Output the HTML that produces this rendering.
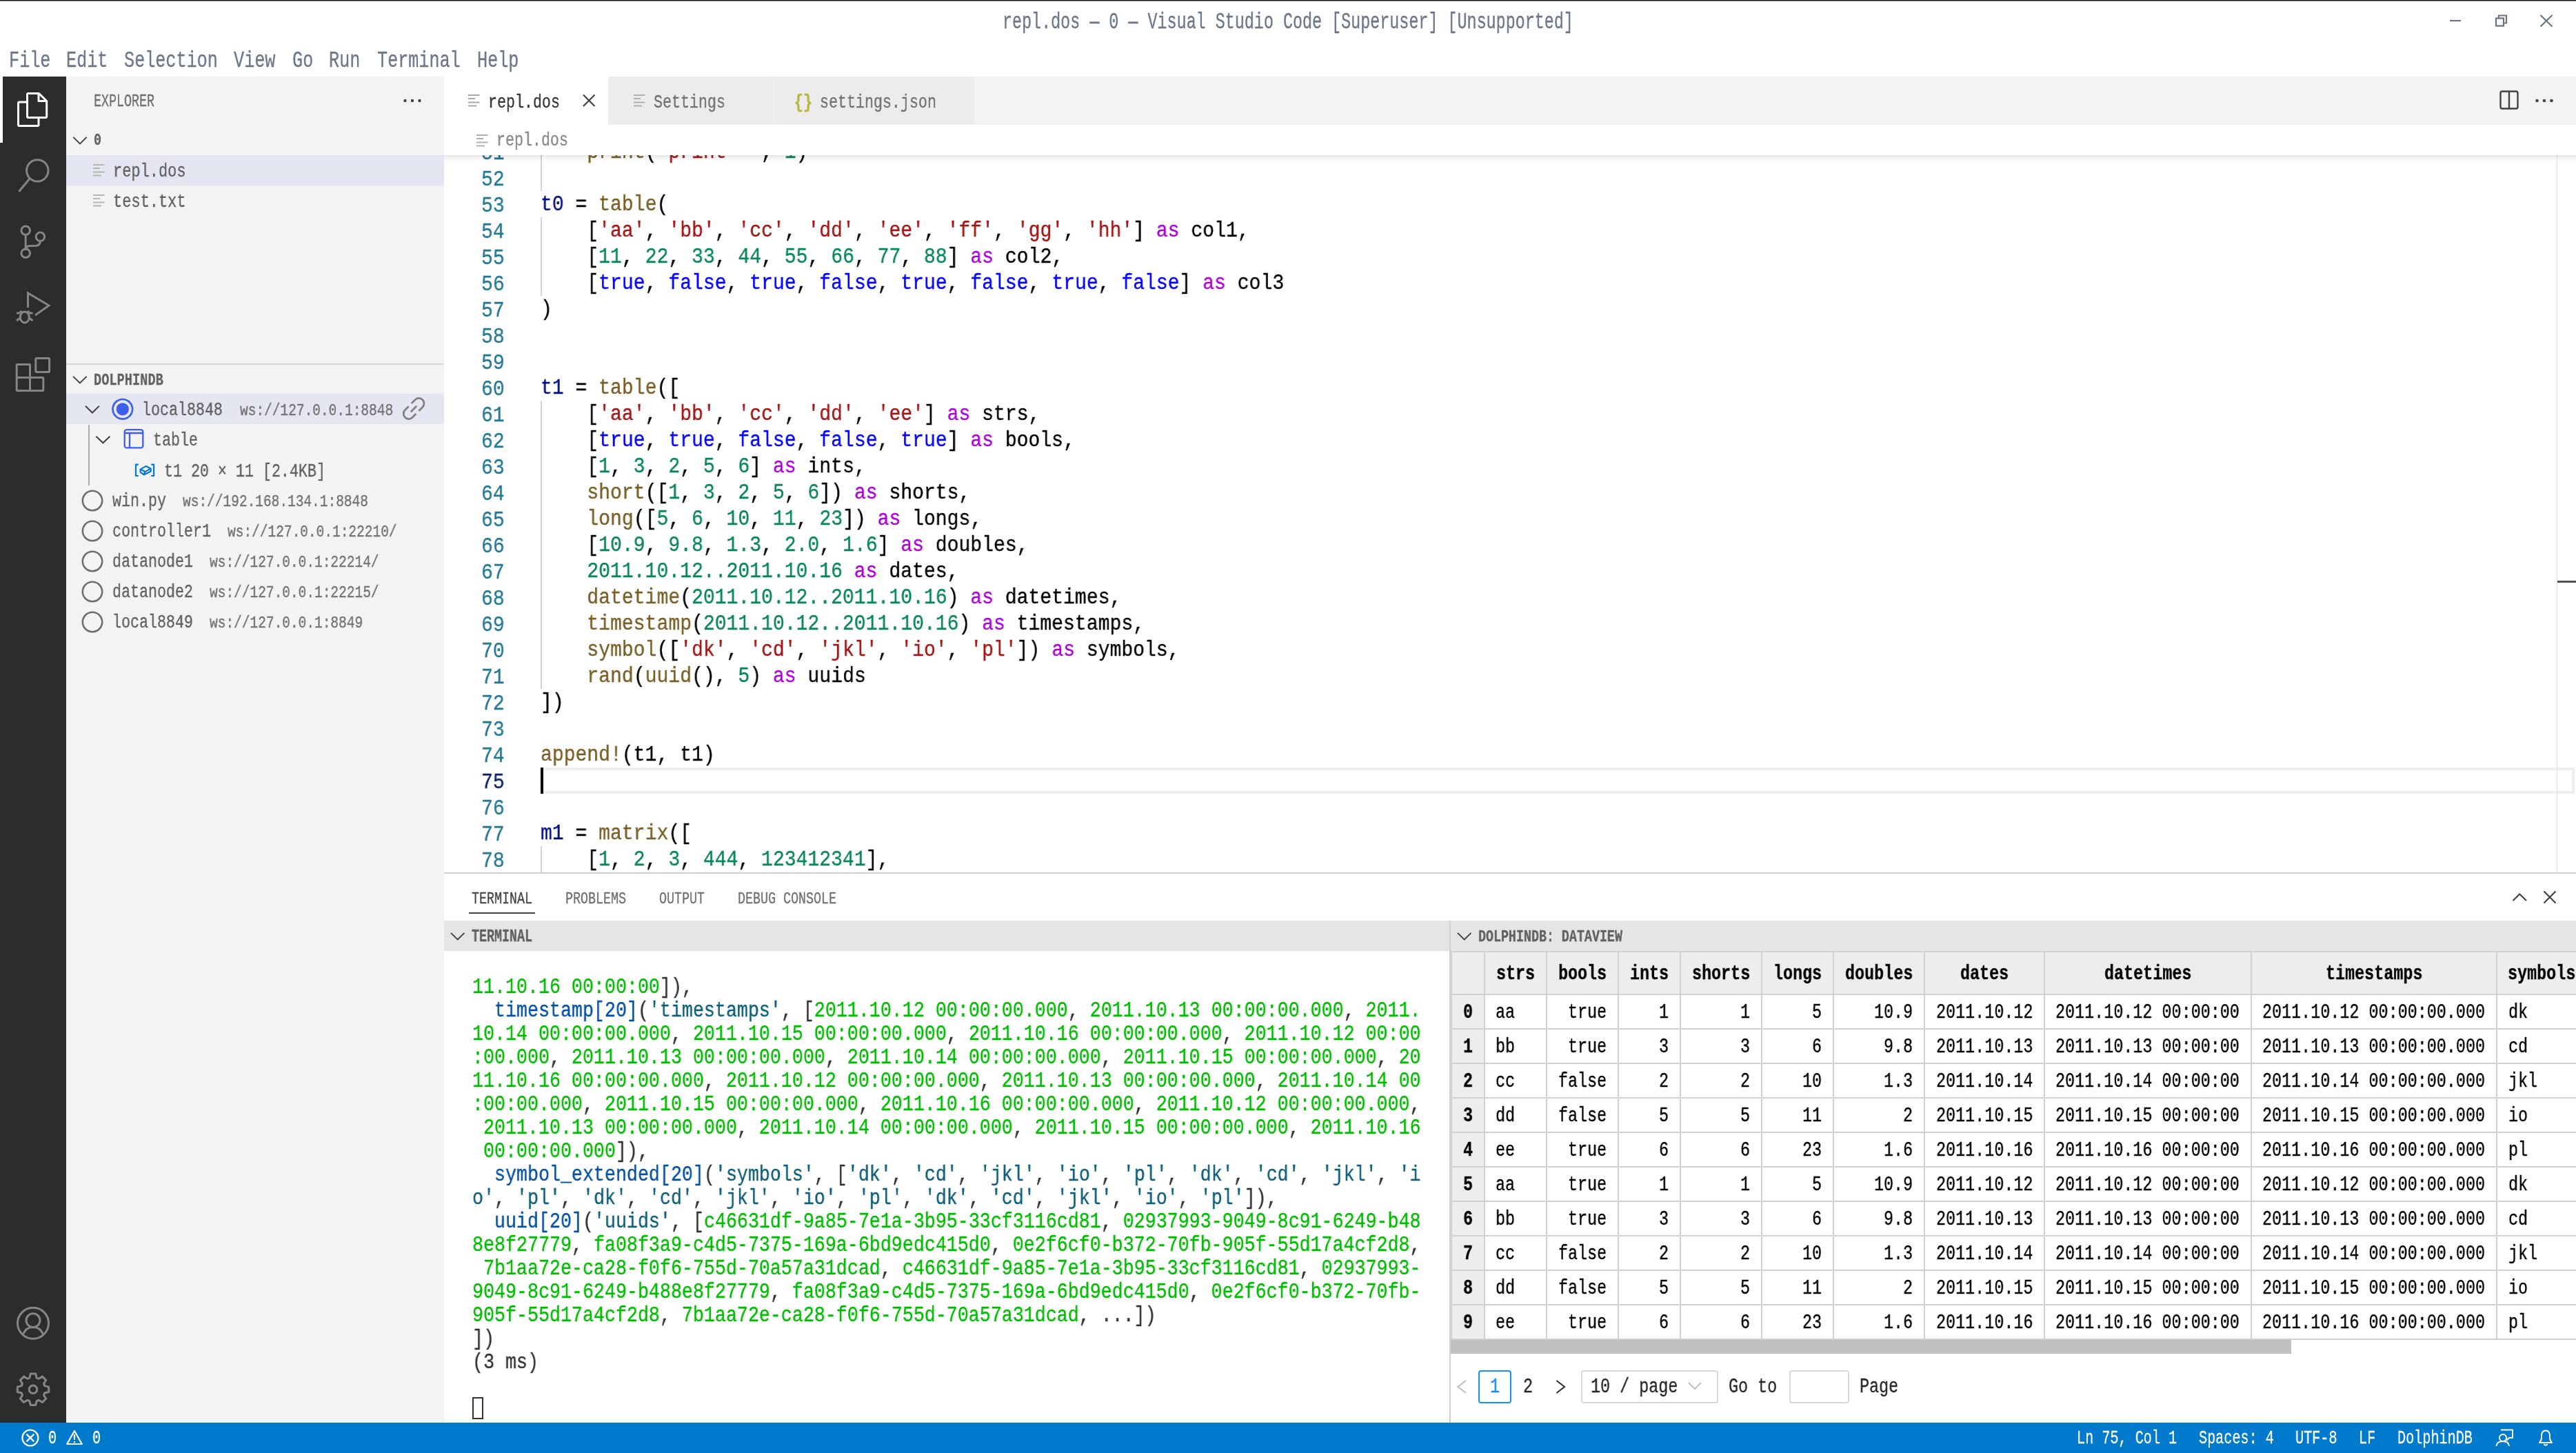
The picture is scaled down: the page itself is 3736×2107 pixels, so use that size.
<!DOCTYPE html>
<html><head><meta charset="utf-8"><style>
html,body{margin:0;padding:0;width:3736px;height:2107px;overflow:hidden;background:#fff;}
body>div{position:absolute;}
.t{position:absolute;white-space:pre;line-height:1;font-family:"Liberation Mono",monospace;will-change:transform;-webkit-text-stroke:0.35px currentColor;}
</style></head><body>
<div style="left:0px;top:0px;width:3736px;height:111px;background:#ffffff;"></div><div style="left:0px;top:0px;width:3736px;height:1px;background:#0b0e17;"></div><div style="left:0px;top:1px;width:3736px;height:1px;background:#8a8c90;"></div><div style="left:0px;top:111px;width:96px;height:1952px;background:#2c2c2c;"></div><div style="left:0px;top:111px;width:4px;height:96px;background:#ffffff;"></div><div style="left:96px;top:111px;width:548px;height:1952px;background:#f3f3f3;"></div><div style="left:644px;top:111px;width:3092px;height:70px;background:#f3f3f3;"></div><div style="left:644px;top:181px;width:3092px;height:1085px;background:#ffffff;"></div><div style="left:644px;top:1266px;width:3092px;height:797px;background:#ffffff;"></div><div style="left:644px;top:1265px;width:3092px;height:2px;background:#d0d0d0;"></div><div style="left:0px;top:2063px;width:3736px;height:44px;background:#007acc;"></div><div class="t" style="left:1453.60px;top:15.54px;font-size:33.095px;color:#6b7689;font-weight:400;transform:scaleX(0.7069);transform-origin:0 25.36px;">repl.dos — 0 — Visual Studio Code [Superuser] [Unsupported]</div><div class="t" style="left:12.70px;top:71.53px;font-size:33.247px;color:#6b7689;font-weight:400;transform:scaleX(0.7568);transform-origin:0 25.47px;">File</div><div class="t" style="left:96.20px;top:71.53px;font-size:33.247px;color:#6b7689;font-weight:400;transform:scaleX(0.7568);transform-origin:0 25.47px;">Edit</div><div class="t" style="left:179.70px;top:71.53px;font-size:33.247px;color:#6b7689;font-weight:400;transform:scaleX(0.7568);transform-origin:0 25.47px;">Selection</div><div class="t" style="left:339.10px;top:71.53px;font-size:33.247px;color:#6b7689;font-weight:400;transform:scaleX(0.7568);transform-origin:0 25.47px;">View</div><div class="t" style="left:423.50px;top:71.53px;font-size:33.247px;color:#6b7689;font-weight:400;transform:scaleX(0.7568);transform-origin:0 25.47px;">Go</div><div class="t" style="left:477.10px;top:71.53px;font-size:33.247px;color:#6b7689;font-weight:400;transform:scaleX(0.7568);transform-origin:0 25.47px;">Run</div><div class="t" style="left:547.00px;top:71.53px;font-size:33.247px;color:#6b7689;font-weight:400;transform:scaleX(0.7568);transform-origin:0 25.47px;">Terminal</div><div class="t" style="left:692.00px;top:71.53px;font-size:33.247px;color:#6b7689;font-weight:400;transform:scaleX(0.7568);transform-origin:0 25.47px;">Help</div><div class="t" style="left:136.00px;top:135.09px;font-size:25.201px;color:#6f6f6f;font-weight:400;transform:scaleX(0.7274);transform-origin:0 19.31px;">EXPLORER</div><div class="t" style="left:136.00px;top:192.42px;font-size:23.987px;color:#616161;font-weight:700;transform:scaleX(0.7642);transform-origin:0 18.38px;">0</div><div style="left:96px;top:225px;width:548px;height:44px;background:#e4e6f1;"></div><div class="t" style="left:164.30px;top:234.86px;font-size:27.327px;color:#616161;font-weight:400;transform:scaleX(0.8049);transform-origin:0 20.94px;">repl.dos</div><div class="t" style="left:164.30px;top:278.86px;font-size:27.327px;color:#616161;font-weight:400;transform:scaleX(0.8049);transform-origin:0 20.94px;">test.txt</div><div style="left:96px;top:527px;width:548px;height:2px;background:#d9d9d9;"></div><div class="t" style="left:136.00px;top:540.25px;font-size:23.683px;color:#616161;font-weight:700;transform:scaleX(0.7881);transform-origin:0 18.15px;">DOLPHINDB</div><div style="left:96px;top:571px;width:548px;height:44px;background:#e4e6f1;"></div><div class="t" style="left:206.00px;top:580.76px;font-size:27.327px;color:#616161;font-weight:400;transform:scaleX(0.7927);transform-origin:0 20.94px;">local8848</div><div class="t" style="left:347.50px;top:583.55px;font-size:23.683px;color:#717171;font-weight:400;transform:scaleX(0.8232);transform-origin:0 18.15px;">ws://127.0.0.1:8848</div><div class="t" style="left:221.70px;top:625.06px;font-size:27.327px;color:#616161;font-weight:400;transform:scaleX(0.7927);transform-origin:0 20.94px;">table</div><div style="left:128px;top:616px;width:2px;height:88px;background:#a9a9a9;"></div><div class="t" style="left:237.60px;top:669.86px;font-size:27.327px;color:#616161;font-weight:400;transform:scaleX(0.7927);transform-origin:0 20.94px;">t1 20 × 11 [2.4KB]</div><div class="t" style="left:162.50px;top:712.76px;font-size:27.327px;color:#616161;font-weight:400;transform:scaleX(0.7927);transform-origin:0 20.94px;">win.py</div><div class="t" style="left:265.10px;top:715.55px;font-size:23.683px;color:#717171;font-weight:400;transform:scaleX(0.8232);transform-origin:0 18.15px;">ws://192.168.134.1:8848</div><div class="t" style="left:162.50px;top:756.76px;font-size:27.327px;color:#616161;font-weight:400;transform:scaleX(0.7927);transform-origin:0 20.94px;">controller1</div><div class="t" style="left:329.50px;top:759.55px;font-size:23.683px;color:#717171;font-weight:400;transform:scaleX(0.8232);transform-origin:0 18.15px;">ws://127.0.0.1:22210/</div><div class="t" style="left:162.50px;top:800.76px;font-size:27.327px;color:#616161;font-weight:400;transform:scaleX(0.7927);transform-origin:0 20.94px;">datanode1</div><div class="t" style="left:303.50px;top:803.55px;font-size:23.683px;color:#717171;font-weight:400;transform:scaleX(0.8232);transform-origin:0 18.15px;">ws://127.0.0.1:22214/</div><div class="t" style="left:162.50px;top:844.76px;font-size:27.327px;color:#616161;font-weight:400;transform:scaleX(0.7927);transform-origin:0 20.94px;">datanode2</div><div class="t" style="left:303.50px;top:847.55px;font-size:23.683px;color:#717171;font-weight:400;transform:scaleX(0.8232);transform-origin:0 18.15px;">ws://127.0.0.1:22215/</div><div class="t" style="left:162.50px;top:888.76px;font-size:27.327px;color:#616161;font-weight:400;transform:scaleX(0.7927);transform-origin:0 20.94px;">local8849</div><div class="t" style="left:303.50px;top:891.55px;font-size:23.683px;color:#717171;font-weight:400;transform:scaleX(0.8232);transform-origin:0 18.15px;">ws://127.0.0.1:8849</div><div style="left:644px;top:111px;width:238px;height:70px;background:#ffffff;"></div><div style="left:882px;top:111px;width:240px;height:70px;background:#ececec;"></div><div style="left:1123px;top:111px;width:290px;height:70px;background:#ececec;"></div><div class="t" style="left:707.70px;top:134.96px;font-size:27.327px;color:#333333;font-weight:400;transform:scaleX(0.7927);transform-origin:0 20.94px;">repl.dos</div><div class="t" style="left:948.00px;top:134.96px;font-size:27.327px;color:#717171;font-weight:400;transform:scaleX(0.7927);transform-origin:0 20.94px;">Settings</div><div class="t" style="left:1152.00px;top:134.96px;font-size:27.327px;color:#b7b73b;font-weight:700;transform:scaleX(0.7927);transform-origin:0 20.94px;">{}</div><div class="t" style="left:1189.00px;top:134.96px;font-size:27.327px;color:#717171;font-weight:400;transform:scaleX(0.7927);transform-origin:0 20.94px;">settings.json</div><div style="left:784px;top:1113px;width:2950px;height:38px;background:transparent;border:4px solid #eeeeee;box-sizing:border-box"></div><div style="left:784px;top:225px;width:2px;height:52px;background:#d3d3d3;"></div><div style="left:784px;top:315px;width:2px;height:114px;background:#d3d3d3;"></div><div style="left:784px;top:581px;width:2px;height:418px;background:#d3d3d3;"></div><div style="left:784px;top:1227px;width:2px;height:38px;background:#d3d3d3;"></div><div class="t" style="left:698.30px;top:207.14px;font-size:31.274px;color:#237893;font-weight:400;transform:scaleX(0.8978);transform-origin:0 23.96px;">51</div><div class="t" style="left:783.50px;top:205.44px;font-size:31.274px;font-weight:400;transform:scaleX(0.8978);transform-origin:0 23.96px"><span style="color:#000000">    </span><span style="color:#795e26">print</span><span style="color:#000000">(</span><span style="color:#a31515">&#x27;print  &#x27;</span><span style="color:#000000">, </span><span style="color:#098658">1</span><span style="color:#000000">)</span></div><div class="t" style="left:698.30px;top:245.14px;font-size:31.274px;color:#237893;font-weight:400;transform:scaleX(0.8978);transform-origin:0 23.96px;">52</div><div class="t" style="left:698.30px;top:283.14px;font-size:31.274px;color:#237893;font-weight:400;transform:scaleX(0.8978);transform-origin:0 23.96px;">53</div><div class="t" style="left:783.50px;top:281.44px;font-size:31.274px;font-weight:400;transform:scaleX(0.8978);transform-origin:0 23.96px"><span style="color:#001080">t0</span><span style="color:#000000"> = </span><span style="color:#795e26">table</span><span style="color:#000000">(</span></div><div class="t" style="left:698.30px;top:321.14px;font-size:31.274px;color:#237893;font-weight:400;transform:scaleX(0.8978);transform-origin:0 23.96px;">54</div><div class="t" style="left:783.50px;top:319.44px;font-size:31.274px;font-weight:400;transform:scaleX(0.8978);transform-origin:0 23.96px"><span style="color:#000000">    [</span><span style="color:#a31515">&#x27;aa&#x27;</span><span style="color:#000000">, </span><span style="color:#a31515">&#x27;bb&#x27;</span><span style="color:#000000">, </span><span style="color:#a31515">&#x27;cc&#x27;</span><span style="color:#000000">, </span><span style="color:#a31515">&#x27;dd&#x27;</span><span style="color:#000000">, </span><span style="color:#a31515">&#x27;ee&#x27;</span><span style="color:#000000">, </span><span style="color:#a31515">&#x27;ff&#x27;</span><span style="color:#000000">, </span><span style="color:#a31515">&#x27;gg&#x27;</span><span style="color:#000000">, </span><span style="color:#a31515">&#x27;hh&#x27;</span><span style="color:#000000">] </span><span style="color:#af00db">as</span><span style="color:#000000"> col1,</span></div><div class="t" style="left:698.30px;top:359.14px;font-size:31.274px;color:#237893;font-weight:400;transform:scaleX(0.8978);transform-origin:0 23.96px;">55</div><div class="t" style="left:783.50px;top:357.44px;font-size:31.274px;font-weight:400;transform:scaleX(0.8978);transform-origin:0 23.96px"><span style="color:#000000">    [</span><span style="color:#098658">11</span><span style="color:#000000">, </span><span style="color:#098658">22</span><span style="color:#000000">, </span><span style="color:#098658">33</span><span style="color:#000000">, </span><span style="color:#098658">44</span><span style="color:#000000">, </span><span style="color:#098658">55</span><span style="color:#000000">, </span><span style="color:#098658">66</span><span style="color:#000000">, </span><span style="color:#098658">77</span><span style="color:#000000">, </span><span style="color:#098658">88</span><span style="color:#000000">] </span><span style="color:#af00db">as</span><span style="color:#000000"> col2,</span></div><div class="t" style="left:698.30px;top:397.14px;font-size:31.274px;color:#237893;font-weight:400;transform:scaleX(0.8978);transform-origin:0 23.96px;">56</div><div class="t" style="left:783.50px;top:395.44px;font-size:31.274px;font-weight:400;transform:scaleX(0.8978);transform-origin:0 23.96px"><span style="color:#000000">    [</span><span style="color:#0000ff">true</span><span style="color:#000000">, </span><span style="color:#0000ff">false</span><span style="color:#000000">, </span><span style="color:#0000ff">true</span><span style="color:#000000">, </span><span style="color:#0000ff">false</span><span style="color:#000000">, </span><span style="color:#0000ff">true</span><span style="color:#000000">, </span><span style="color:#0000ff">false</span><span style="color:#000000">, </span><span style="color:#0000ff">true</span><span style="color:#000000">, </span><span style="color:#0000ff">false</span><span style="color:#000000">] </span><span style="color:#af00db">as</span><span style="color:#000000"> col3</span></div><div class="t" style="left:698.30px;top:435.14px;font-size:31.274px;color:#237893;font-weight:400;transform:scaleX(0.8978);transform-origin:0 23.96px;">57</div><div class="t" style="left:783.50px;top:433.44px;font-size:31.274px;font-weight:400;transform:scaleX(0.8978);transform-origin:0 23.96px"><span style="color:#000000">)</span></div><div class="t" style="left:698.30px;top:473.14px;font-size:31.274px;color:#237893;font-weight:400;transform:scaleX(0.8978);transform-origin:0 23.96px;">58</div><div class="t" style="left:698.30px;top:511.14px;font-size:31.274px;color:#237893;font-weight:400;transform:scaleX(0.8978);transform-origin:0 23.96px;">59</div><div class="t" style="left:698.30px;top:549.14px;font-size:31.274px;color:#237893;font-weight:400;transform:scaleX(0.8978);transform-origin:0 23.96px;">60</div><div class="t" style="left:783.50px;top:547.44px;font-size:31.274px;font-weight:400;transform:scaleX(0.8978);transform-origin:0 23.96px"><span style="color:#001080">t1</span><span style="color:#000000"> = </span><span style="color:#795e26">table</span><span style="color:#000000">([</span></div><div class="t" style="left:698.30px;top:587.14px;font-size:31.274px;color:#237893;font-weight:400;transform:scaleX(0.8978);transform-origin:0 23.96px;">61</div><div class="t" style="left:783.50px;top:585.44px;font-size:31.274px;font-weight:400;transform:scaleX(0.8978);transform-origin:0 23.96px"><span style="color:#000000">    [</span><span style="color:#a31515">&#x27;aa&#x27;</span><span style="color:#000000">, </span><span style="color:#a31515">&#x27;bb&#x27;</span><span style="color:#000000">, </span><span style="color:#a31515">&#x27;cc&#x27;</span><span style="color:#000000">, </span><span style="color:#a31515">&#x27;dd&#x27;</span><span style="color:#000000">, </span><span style="color:#a31515">&#x27;ee&#x27;</span><span style="color:#000000">] </span><span style="color:#af00db">as</span><span style="color:#000000"> strs,</span></div><div class="t" style="left:698.30px;top:625.14px;font-size:31.274px;color:#237893;font-weight:400;transform:scaleX(0.8978);transform-origin:0 23.96px;">62</div><div class="t" style="left:783.50px;top:623.44px;font-size:31.274px;font-weight:400;transform:scaleX(0.8978);transform-origin:0 23.96px"><span style="color:#000000">    [</span><span style="color:#0000ff">true</span><span style="color:#000000">, </span><span style="color:#0000ff">true</span><span style="color:#000000">, </span><span style="color:#0000ff">false</span><span style="color:#000000">, </span><span style="color:#0000ff">false</span><span style="color:#000000">, </span><span style="color:#0000ff">true</span><span style="color:#000000">] </span><span style="color:#af00db">as</span><span style="color:#000000"> bools,</span></div><div class="t" style="left:698.30px;top:663.14px;font-size:31.274px;color:#237893;font-weight:400;transform:scaleX(0.8978);transform-origin:0 23.96px;">63</div><div class="t" style="left:783.50px;top:661.44px;font-size:31.274px;font-weight:400;transform:scaleX(0.8978);transform-origin:0 23.96px"><span style="color:#000000">    [</span><span style="color:#098658">1</span><span style="color:#000000">, </span><span style="color:#098658">3</span><span style="color:#000000">, </span><span style="color:#098658">2</span><span style="color:#000000">, </span><span style="color:#098658">5</span><span style="color:#000000">, </span><span style="color:#098658">6</span><span style="color:#000000">] </span><span style="color:#af00db">as</span><span style="color:#000000"> ints,</span></div><div class="t" style="left:698.30px;top:701.14px;font-size:31.274px;color:#237893;font-weight:400;transform:scaleX(0.8978);transform-origin:0 23.96px;">64</div><div class="t" style="left:783.50px;top:699.44px;font-size:31.274px;font-weight:400;transform:scaleX(0.8978);transform-origin:0 23.96px"><span style="color:#000000">    </span><span style="color:#795e26">short</span><span style="color:#000000">([</span><span style="color:#098658">1</span><span style="color:#000000">, </span><span style="color:#098658">3</span><span style="color:#000000">, </span><span style="color:#098658">2</span><span style="color:#000000">, </span><span style="color:#098658">5</span><span style="color:#000000">, </span><span style="color:#098658">6</span><span style="color:#000000">]) </span><span style="color:#af00db">as</span><span style="color:#000000"> shorts,</span></div><div class="t" style="left:698.30px;top:739.14px;font-size:31.274px;color:#237893;font-weight:400;transform:scaleX(0.8978);transform-origin:0 23.96px;">65</div><div class="t" style="left:783.50px;top:737.44px;font-size:31.274px;font-weight:400;transform:scaleX(0.8978);transform-origin:0 23.96px"><span style="color:#000000">    </span><span style="color:#795e26">long</span><span style="color:#000000">([</span><span style="color:#098658">5</span><span style="color:#000000">, </span><span style="color:#098658">6</span><span style="color:#000000">, </span><span style="color:#098658">10</span><span style="color:#000000">, </span><span style="color:#098658">11</span><span style="color:#000000">, </span><span style="color:#098658">23</span><span style="color:#000000">]) </span><span style="color:#af00db">as</span><span style="color:#000000"> longs,</span></div><div class="t" style="left:698.30px;top:777.14px;font-size:31.274px;color:#237893;font-weight:400;transform:scaleX(0.8978);transform-origin:0 23.96px;">66</div><div class="t" style="left:783.50px;top:775.44px;font-size:31.274px;font-weight:400;transform:scaleX(0.8978);transform-origin:0 23.96px"><span style="color:#000000">    [</span><span style="color:#098658">10.9</span><span style="color:#000000">, </span><span style="color:#098658">9.8</span><span style="color:#000000">, </span><span style="color:#098658">1.3</span><span style="color:#000000">, </span><span style="color:#098658">2.0</span><span style="color:#000000">, </span><span style="color:#098658">1.6</span><span style="color:#000000">] </span><span style="color:#af00db">as</span><span style="color:#000000"> doubles,</span></div><div class="t" style="left:698.30px;top:815.14px;font-size:31.274px;color:#237893;font-weight:400;transform:scaleX(0.8978);transform-origin:0 23.96px;">67</div><div class="t" style="left:783.50px;top:813.44px;font-size:31.274px;font-weight:400;transform:scaleX(0.8978);transform-origin:0 23.96px"><span style="color:#000000">    </span><span style="color:#098658">2011.10.12..2011.10.16</span><span style="color:#000000"> </span><span style="color:#af00db">as</span><span style="color:#000000"> dates,</span></div><div class="t" style="left:698.30px;top:853.14px;font-size:31.274px;color:#237893;font-weight:400;transform:scaleX(0.8978);transform-origin:0 23.96px;">68</div><div class="t" style="left:783.50px;top:851.44px;font-size:31.274px;font-weight:400;transform:scaleX(0.8978);transform-origin:0 23.96px"><span style="color:#000000">    </span><span style="color:#795e26">datetime</span><span style="color:#000000">(</span><span style="color:#098658">2011.10.12..2011.10.16</span><span style="color:#000000">) </span><span style="color:#af00db">as</span><span style="color:#000000"> datetimes,</span></div><div class="t" style="left:698.30px;top:891.14px;font-size:31.274px;color:#237893;font-weight:400;transform:scaleX(0.8978);transform-origin:0 23.96px;">69</div><div class="t" style="left:783.50px;top:889.44px;font-size:31.274px;font-weight:400;transform:scaleX(0.8978);transform-origin:0 23.96px"><span style="color:#000000">    </span><span style="color:#795e26">timestamp</span><span style="color:#000000">(</span><span style="color:#098658">2011.10.12..2011.10.16</span><span style="color:#000000">) </span><span style="color:#af00db">as</span><span style="color:#000000"> timestamps,</span></div><div class="t" style="left:698.30px;top:929.14px;font-size:31.274px;color:#237893;font-weight:400;transform:scaleX(0.8978);transform-origin:0 23.96px;">70</div><div class="t" style="left:783.50px;top:927.44px;font-size:31.274px;font-weight:400;transform:scaleX(0.8978);transform-origin:0 23.96px"><span style="color:#000000">    </span><span style="color:#795e26">symbol</span><span style="color:#000000">([</span><span style="color:#a31515">&#x27;dk&#x27;</span><span style="color:#000000">, </span><span style="color:#a31515">&#x27;cd&#x27;</span><span style="color:#000000">, </span><span style="color:#a31515">&#x27;jkl&#x27;</span><span style="color:#000000">, </span><span style="color:#a31515">&#x27;io&#x27;</span><span style="color:#000000">, </span><span style="color:#a31515">&#x27;pl&#x27;</span><span style="color:#000000">]) </span><span style="color:#af00db">as</span><span style="color:#000000"> symbols,</span></div><div class="t" style="left:698.30px;top:967.14px;font-size:31.274px;color:#237893;font-weight:400;transform:scaleX(0.8978);transform-origin:0 23.96px;">71</div><div class="t" style="left:783.50px;top:965.44px;font-size:31.274px;font-weight:400;transform:scaleX(0.8978);transform-origin:0 23.96px"><span style="color:#000000">    </span><span style="color:#795e26">rand</span><span style="color:#000000">(</span><span style="color:#795e26">uuid</span><span style="color:#000000">(), </span><span style="color:#098658">5</span><span style="color:#000000">) </span><span style="color:#af00db">as</span><span style="color:#000000"> uuids</span></div><div class="t" style="left:698.30px;top:1005.14px;font-size:31.274px;color:#237893;font-weight:400;transform:scaleX(0.8978);transform-origin:0 23.96px;">72</div><div class="t" style="left:783.50px;top:1003.44px;font-size:31.274px;font-weight:400;transform:scaleX(0.8978);transform-origin:0 23.96px"><span style="color:#000000">])</span></div><div class="t" style="left:698.30px;top:1043.14px;font-size:31.274px;color:#237893;font-weight:400;transform:scaleX(0.8978);transform-origin:0 23.96px;">73</div><div class="t" style="left:698.30px;top:1081.14px;font-size:31.274px;color:#237893;font-weight:400;transform:scaleX(0.8978);transform-origin:0 23.96px;">74</div><div class="t" style="left:783.50px;top:1079.44px;font-size:31.274px;font-weight:400;transform:scaleX(0.8978);transform-origin:0 23.96px"><span style="color:#795e26">append!</span><span style="color:#000000">(t1, t1)</span></div><div class="t" style="left:698.30px;top:1119.14px;font-size:31.274px;color:#0b216f;font-weight:400;transform:scaleX(0.8978);transform-origin:0 23.96px;">75</div><div class="t" style="left:698.30px;top:1157.14px;font-size:31.274px;color:#237893;font-weight:400;transform:scaleX(0.8978);transform-origin:0 23.96px;">76</div><div class="t" style="left:698.30px;top:1195.14px;font-size:31.274px;color:#237893;font-weight:400;transform:scaleX(0.8978);transform-origin:0 23.96px;">77</div><div class="t" style="left:783.50px;top:1193.44px;font-size:31.274px;font-weight:400;transform:scaleX(0.8978);transform-origin:0 23.96px"><span style="color:#001080">m1</span><span style="color:#000000"> = </span><span style="color:#795e26">matrix</span><span style="color:#000000">([</span></div><div class="t" style="left:698.30px;top:1233.14px;font-size:31.274px;color:#237893;font-weight:400;transform:scaleX(0.8978);transform-origin:0 23.96px;">78</div><div class="t" style="left:783.50px;top:1231.44px;font-size:31.274px;font-weight:400;transform:scaleX(0.8978);transform-origin:0 23.96px"><span style="color:#000000">    [</span><span style="color:#098658">1</span><span style="color:#000000">, </span><span style="color:#098658">2</span><span style="color:#000000">, </span><span style="color:#098658">3</span><span style="color:#000000">, </span><span style="color:#098658">444</span><span style="color:#000000">, </span><span style="color:#098658">123412341</span><span style="color:#000000">],</span></div><div style="left:784px;top:1113px;width:4px;height:38px;background:#000000;"></div><div style="left:3708px;top:225px;width:1px;height:1041px;background:#e0e0e0;"></div><div style="left:3709px;top:842px;width:27px;height:3px;background:#505050;"></div><div style="left:644px;top:181px;width:3092px;height:44px;background:#ffffff;"></div><div class="t" style="left:720.00px;top:190.26px;font-size:27.327px;color:#888888;font-weight:400;transform:scaleX(0.7927);transform-origin:0 20.94px;">repl.dos</div><div style="left:644px;top:225px;width:3092px;height:10px;background:linear-gradient(rgba(0,0,0,0.1),rgba(0,0,0,0.035) 45%,rgba(0,0,0,0));"></div><div class="t" style="left:684.00px;top:1292.47px;font-size:24.442px;color:#424242;font-weight:400;transform:scaleX(0.7499);transform-origin:0 18.73px;">TERMINAL</div><div class="t" style="left:820.00px;top:1292.47px;font-size:24.442px;color:#6f6f6f;font-weight:400;transform:scaleX(0.7499);transform-origin:0 18.73px;">PROBLEMS</div><div class="t" style="left:956.40px;top:1292.47px;font-size:24.442px;color:#6f6f6f;font-weight:400;transform:scaleX(0.7499);transform-origin:0 18.73px;">OUTPUT</div><div class="t" style="left:1069.70px;top:1292.47px;font-size:24.442px;color:#6f6f6f;font-weight:400;transform:scaleX(0.7499);transform-origin:0 18.73px;">DEBUG CONSOLE</div><div style="left:680px;top:1323px;width:96px;height:2px;background:#424242;"></div><div style="left:644px;top:1335px;width:1458px;height:44px;background:#e5e5e5;"></div><div style="left:2104px;top:1335px;width:1632px;height:44px;background:#e5e5e5;"></div><div style="left:2102px;top:1335px;width:2px;height:728px;background:#d0d0d0;"></div><div class="t" style="left:684.00px;top:1345.87px;font-size:25.353px;color:#616161;font-weight:700;transform:scaleX(0.7230);transform-origin:0 19.43px;">TERMINAL</div><div class="t" style="left:2143.60px;top:1346.04px;font-size:24.746px;color:#616161;font-weight:700;transform:scaleX(0.7407);transform-origin:0 18.96px;">DOLPHINDB: DATAVIEW</div><div class="t" style="left:685.20px;top:1417.40px;font-size:30.666px;font-weight:400;transform:scaleX(0.8694);transform-origin:0 23.50px"><span style="color:#00bc00">11.10.16 00:00:00</span><span style="color:#333333">]),</span></div><div class="t" style="left:685.20px;top:1451.40px;font-size:30.666px;font-weight:400;transform:scaleX(0.8694);transform-origin:0 23.50px"><span style="color:#333333">  </span><span style="color:#0451a5">timestamp[20]</span><span style="color:#333333">(</span><span style="color:#0e6079">&#x27;timestamps&#x27;</span><span style="color:#333333">, [</span><span style="color:#00bc00">2011.10.12 00:00:00.000</span><span style="color:#333333">, </span><span style="color:#00bc00">2011.10.13 00:00:00.000</span><span style="color:#333333">, </span><span style="color:#00bc00">2011.</span></div><div class="t" style="left:685.20px;top:1485.40px;font-size:30.666px;font-weight:400;transform:scaleX(0.8694);transform-origin:0 23.50px"><span style="color:#00bc00">10.14 00:00:00.000</span><span style="color:#333333">, </span><span style="color:#00bc00">2011.10.15 00:00:00.000</span><span style="color:#333333">, </span><span style="color:#00bc00">2011.10.16 00:00:00.000</span><span style="color:#333333">, </span><span style="color:#00bc00">2011.10.12 00:00</span></div><div class="t" style="left:685.20px;top:1519.40px;font-size:30.666px;font-weight:400;transform:scaleX(0.8694);transform-origin:0 23.50px"><span style="color:#00bc00">:00.000</span><span style="color:#333333">, </span><span style="color:#00bc00">2011.10.13 00:00:00.000</span><span style="color:#333333">, </span><span style="color:#00bc00">2011.10.14 00:00:00.000</span><span style="color:#333333">, </span><span style="color:#00bc00">2011.10.15 00:00:00.000</span><span style="color:#333333">, </span><span style="color:#00bc00">20</span></div><div class="t" style="left:685.20px;top:1553.40px;font-size:30.666px;font-weight:400;transform:scaleX(0.8694);transform-origin:0 23.50px"><span style="color:#00bc00">11.10.16 00:00:00.000</span><span style="color:#333333">, </span><span style="color:#00bc00">2011.10.12 00:00:00.000</span><span style="color:#333333">, </span><span style="color:#00bc00">2011.10.13 00:00:00.000</span><span style="color:#333333">, </span><span style="color:#00bc00">2011.10.14 00</span></div><div class="t" style="left:685.20px;top:1587.40px;font-size:30.666px;font-weight:400;transform:scaleX(0.8694);transform-origin:0 23.50px"><span style="color:#00bc00">:00:00.000</span><span style="color:#333333">, </span><span style="color:#00bc00">2011.10.15 00:00:00.000</span><span style="color:#333333">, </span><span style="color:#00bc00">2011.10.16 00:00:00.000</span><span style="color:#333333">, </span><span style="color:#00bc00">2011.10.12 00:00:00.000</span><span style="color:#333333">,</span></div><div class="t" style="left:685.20px;top:1621.40px;font-size:30.666px;font-weight:400;transform:scaleX(0.8694);transform-origin:0 23.50px"><span style="color:#333333"> </span><span style="color:#00bc00">2011.10.13 00:00:00.000</span><span style="color:#333333">, </span><span style="color:#00bc00">2011.10.14 00:00:00.000</span><span style="color:#333333">, </span><span style="color:#00bc00">2011.10.15 00:00:00.000</span><span style="color:#333333">, </span><span style="color:#00bc00">2011.10.16</span></div><div class="t" style="left:685.20px;top:1655.40px;font-size:30.666px;font-weight:400;transform:scaleX(0.8694);transform-origin:0 23.50px"><span style="color:#00bc00"> 00:00:00.000</span><span style="color:#333333">]),</span></div><div class="t" style="left:685.20px;top:1689.40px;font-size:30.666px;font-weight:400;transform:scaleX(0.8694);transform-origin:0 23.50px"><span style="color:#333333">  </span><span style="color:#0451a5">symbol_extended[20]</span><span style="color:#333333">(</span><span style="color:#0e6079">&#x27;symbols&#x27;</span><span style="color:#333333">, [</span><span style="color:#0e6079">&#x27;dk&#x27;</span><span style="color:#333333">, </span><span style="color:#0e6079">&#x27;cd&#x27;</span><span style="color:#333333">, </span><span style="color:#0e6079">&#x27;jkl&#x27;</span><span style="color:#333333">, </span><span style="color:#0e6079">&#x27;io&#x27;</span><span style="color:#333333">, </span><span style="color:#0e6079">&#x27;pl&#x27;</span><span style="color:#333333">, </span><span style="color:#0e6079">&#x27;dk&#x27;</span><span style="color:#333333">, </span><span style="color:#0e6079">&#x27;cd&#x27;</span><span style="color:#333333">, </span><span style="color:#0e6079">&#x27;jkl&#x27;</span><span style="color:#333333">, </span><span style="color:#0e6079">&#x27;i</span></div><div class="t" style="left:685.20px;top:1723.40px;font-size:30.666px;font-weight:400;transform:scaleX(0.8694);transform-origin:0 23.50px"><span style="color:#0e6079">o&#x27;</span><span style="color:#333333">, </span><span style="color:#0e6079">&#x27;pl&#x27;</span><span style="color:#333333">, </span><span style="color:#0e6079">&#x27;dk&#x27;</span><span style="color:#333333">, </span><span style="color:#0e6079">&#x27;cd&#x27;</span><span style="color:#333333">, </span><span style="color:#0e6079">&#x27;jkl&#x27;</span><span style="color:#333333">, </span><span style="color:#0e6079">&#x27;io&#x27;</span><span style="color:#333333">, </span><span style="color:#0e6079">&#x27;pl&#x27;</span><span style="color:#333333">, </span><span style="color:#0e6079">&#x27;dk&#x27;</span><span style="color:#333333">, </span><span style="color:#0e6079">&#x27;cd&#x27;</span><span style="color:#333333">, </span><span style="color:#0e6079">&#x27;jkl&#x27;</span><span style="color:#333333">, </span><span style="color:#0e6079">&#x27;io&#x27;</span><span style="color:#333333">, </span><span style="color:#0e6079">&#x27;pl&#x27;</span><span style="color:#333333">]),</span></div><div class="t" style="left:685.20px;top:1757.40px;font-size:30.666px;font-weight:400;transform:scaleX(0.8694);transform-origin:0 23.50px"><span style="color:#333333">  </span><span style="color:#0451a5">uuid[20]</span><span style="color:#333333">(</span><span style="color:#0e6079">&#x27;uuids&#x27;</span><span style="color:#333333">, [</span><span style="color:#00bc00">c46631df-9a85-7e1a-3b95-33cf3116cd81</span><span style="color:#333333">, </span><span style="color:#00bc00">02937993-9049-8c91-6249-b48</span></div><div class="t" style="left:685.20px;top:1791.40px;font-size:30.666px;font-weight:400;transform:scaleX(0.8694);transform-origin:0 23.50px"><span style="color:#00bc00">8e8f27779</span><span style="color:#333333">, </span><span style="color:#00bc00">fa08f3a9-c4d5-7375-169a-6bd9edc415d0</span><span style="color:#333333">, </span><span style="color:#00bc00">0e2f6cf0-b372-70fb-905f-55d17a4cf2d8</span><span style="color:#333333">,</span></div><div class="t" style="left:685.20px;top:1825.40px;font-size:30.666px;font-weight:400;transform:scaleX(0.8694);transform-origin:0 23.50px"><span style="color:#333333"> </span><span style="color:#00bc00">7b1aa72e-ca28-f0f6-755d-70a57a31dcad</span><span style="color:#333333">, </span><span style="color:#00bc00">c46631df-9a85-7e1a-3b95-33cf3116cd81</span><span style="color:#333333">, </span><span style="color:#00bc00">02937993-</span></div><div class="t" style="left:685.20px;top:1859.40px;font-size:30.666px;font-weight:400;transform:scaleX(0.8694);transform-origin:0 23.50px"><span style="color:#00bc00">9049-8c91-6249-b488e8f27779</span><span style="color:#333333">, </span><span style="color:#00bc00">fa08f3a9-c4d5-7375-169a-6bd9edc415d0</span><span style="color:#333333">, </span><span style="color:#00bc00">0e2f6cf0-b372-70fb-</span></div><div class="t" style="left:685.20px;top:1893.40px;font-size:30.666px;font-weight:400;transform:scaleX(0.8694);transform-origin:0 23.50px"><span style="color:#00bc00">905f-55d17a4cf2d8</span><span style="color:#333333">, </span><span style="color:#00bc00">7b1aa72e-ca28-f0f6-755d-70a57a31dcad</span><span style="color:#333333">, ...])</span></div><div class="t" style="left:685.20px;top:1927.40px;font-size:30.666px;font-weight:400;transform:scaleX(0.8694);transform-origin:0 23.50px"><span style="color:#333333">])</span></div><div class="t" style="left:685.20px;top:1961.40px;font-size:30.666px;font-weight:400;transform:scaleX(0.8694);transform-origin:0 23.50px"><span style="color:#333333">(3 ms)</span></div><div style="left:684.5px;top:2026px;width:16px;height:31.5px;background:transparent;border:2px solid #333;box-sizing:border-box"></div><div style="left:2104px;top:1379px;width:1632px;height:62px;background:#ededed;"></div><div style="left:2104px;top:1441px;width:48px;height:500px;background:#ededed;"></div><div style="left:2104px;top:1379px;width:1632px;height:2px;background:#d0d0d0;"></div><div style="left:2104px;top:1441px;width:1632px;height:2px;background:#d0d0d0;"></div><div style="left:2104px;top:1491px;width:1632px;height:2px;background:#d0d0d0;"></div><div style="left:2104px;top:1541px;width:1632px;height:2px;background:#d0d0d0;"></div><div style="left:2104px;top:1591px;width:1632px;height:2px;background:#d0d0d0;"></div><div style="left:2104px;top:1641px;width:1632px;height:2px;background:#d0d0d0;"></div><div style="left:2104px;top:1691px;width:1632px;height:2px;background:#d0d0d0;"></div><div style="left:2104px;top:1741px;width:1632px;height:2px;background:#d0d0d0;"></div><div style="left:2104px;top:1791px;width:1632px;height:2px;background:#d0d0d0;"></div><div style="left:2104px;top:1841px;width:1632px;height:2px;background:#d0d0d0;"></div><div style="left:2104px;top:1891px;width:1632px;height:2px;background:#d0d0d0;"></div><div style="left:2104px;top:1941px;width:1632px;height:2px;background:#d0d0d0;"></div><div style="left:2104px;top:1379px;width:2px;height:564px;background:#d0d0d0;"></div><div style="left:2152px;top:1379px;width:2px;height:564px;background:#d0d0d0;"></div><div style="left:2242px;top:1379px;width:2px;height:564px;background:#d0d0d0;"></div><div style="left:2346px;top:1379px;width:2px;height:564px;background:#d0d0d0;"></div><div style="left:2436px;top:1379px;width:2px;height:564px;background:#d0d0d0;"></div><div style="left:2554px;top:1379px;width:2px;height:564px;background:#d0d0d0;"></div><div style="left:2658px;top:1379px;width:2px;height:564px;background:#d0d0d0;"></div><div style="left:2790px;top:1379px;width:2px;height:564px;background:#d0d0d0;"></div><div style="left:2964px;top:1379px;width:2px;height:564px;background:#d0d0d0;"></div><div style="left:3264px;top:1379px;width:2px;height:564px;background:#d0d0d0;"></div><div style="left:3620px;top:1379px;width:2px;height:564px;background:#d0d0d0;"></div><div class="t" style="left:2169.90px;top:1397.07px;font-size:30.059px;color:#000000;font-weight:700;transform:scaleX(0.7789);transform-origin:0 23.03px;">strs</div><div class="t" style="left:2259.88px;top:1397.07px;font-size:30.059px;color:#000000;font-weight:700;transform:scaleX(0.7789);transform-origin:0 23.03px;">bools</div><div class="t" style="left:2363.90px;top:1397.07px;font-size:30.059px;color:#000000;font-weight:700;transform:scaleX(0.7789);transform-origin:0 23.03px;">ints</div><div class="t" style="left:2453.85px;top:1397.07px;font-size:30.059px;color:#000000;font-weight:700;transform:scaleX(0.7789);transform-origin:0 23.03px;">shorts</div><div class="t" style="left:2571.88px;top:1397.07px;font-size:30.059px;color:#000000;font-weight:700;transform:scaleX(0.7789);transform-origin:0 23.03px;">longs</div><div class="t" style="left:2675.82px;top:1397.07px;font-size:30.059px;color:#000000;font-weight:700;transform:scaleX(0.7789);transform-origin:0 23.03px;">doubles</div><div class="t" style="left:2842.88px;top:1397.07px;font-size:30.059px;color:#000000;font-weight:700;transform:scaleX(0.7789);transform-origin:0 23.03px;">dates</div><div class="t" style="left:3051.78px;top:1397.07px;font-size:30.059px;color:#000000;font-weight:700;transform:scaleX(0.7789);transform-origin:0 23.03px;">datetimes</div><div class="t" style="left:3372.75px;top:1397.07px;font-size:30.059px;color:#000000;font-weight:700;transform:scaleX(0.7789);transform-origin:0 23.03px;">timestamps</div><div class="t" style="left:3637.00px;top:1397.07px;font-size:30.059px;color:#000000;font-weight:700;transform:scaleX(0.7789);transform-origin:0 23.03px;">symbols</div><div class="t" style="left:2121.97px;top:1452.77px;font-size:30.059px;color:#000000;font-weight:700;transform:scaleX(0.7789);transform-origin:0 23.03px;">0</div><div class="t" style="left:2169.00px;top:1452.77px;font-size:30.059px;color:#000000;font-weight:400;transform:scaleX(0.7789);transform-origin:0 23.03px;">aa</div><div class="t" style="left:2273.80px;top:1452.77px;font-size:30.059px;color:#000000;font-weight:400;transform:scaleX(0.7789);transform-origin:0 23.03px;">true</div><div class="t" style="left:2405.95px;top:1452.77px;font-size:30.059px;color:#000000;font-weight:400;transform:scaleX(0.7789);transform-origin:0 23.03px;">1</div><div class="t" style="left:2523.95px;top:1452.77px;font-size:30.059px;color:#000000;font-weight:400;transform:scaleX(0.7789);transform-origin:0 23.03px;">1</div><div class="t" style="left:2627.95px;top:1452.77px;font-size:30.059px;color:#000000;font-weight:400;transform:scaleX(0.7789);transform-origin:0 23.03px;">5</div><div class="t" style="left:2717.80px;top:1452.77px;font-size:30.059px;color:#000000;font-weight:400;transform:scaleX(0.7789);transform-origin:0 23.03px;">10.9</div><div class="t" style="left:2807.50px;top:1452.77px;font-size:30.059px;color:#000000;font-weight:400;transform:scaleX(0.7789);transform-origin:0 23.03px;">2011.10.12</div><div class="t" style="left:2981.05px;top:1452.77px;font-size:30.059px;color:#000000;font-weight:400;transform:scaleX(0.7789);transform-origin:0 23.03px;">2011.10.12 00:00:00</div><div class="t" style="left:3280.85px;top:1452.77px;font-size:30.059px;color:#000000;font-weight:400;transform:scaleX(0.7789);transform-origin:0 23.03px;">2011.10.12 00:00:00.000</div><div class="t" style="left:3638.00px;top:1452.77px;font-size:30.059px;color:#000000;font-weight:400;transform:scaleX(0.7789);transform-origin:0 23.03px;">dk</div><div class="t" style="left:2121.97px;top:1502.77px;font-size:30.059px;color:#000000;font-weight:700;transform:scaleX(0.7789);transform-origin:0 23.03px;">1</div><div class="t" style="left:2169.00px;top:1502.77px;font-size:30.059px;color:#000000;font-weight:400;transform:scaleX(0.7789);transform-origin:0 23.03px;">bb</div><div class="t" style="left:2273.80px;top:1502.77px;font-size:30.059px;color:#000000;font-weight:400;transform:scaleX(0.7789);transform-origin:0 23.03px;">true</div><div class="t" style="left:2405.95px;top:1502.77px;font-size:30.059px;color:#000000;font-weight:400;transform:scaleX(0.7789);transform-origin:0 23.03px;">3</div><div class="t" style="left:2523.95px;top:1502.77px;font-size:30.059px;color:#000000;font-weight:400;transform:scaleX(0.7789);transform-origin:0 23.03px;">3</div><div class="t" style="left:2627.95px;top:1502.77px;font-size:30.059px;color:#000000;font-weight:400;transform:scaleX(0.7789);transform-origin:0 23.03px;">6</div><div class="t" style="left:2731.85px;top:1502.77px;font-size:30.059px;color:#000000;font-weight:400;transform:scaleX(0.7789);transform-origin:0 23.03px;">9.8</div><div class="t" style="left:2807.50px;top:1502.77px;font-size:30.059px;color:#000000;font-weight:400;transform:scaleX(0.7789);transform-origin:0 23.03px;">2011.10.13</div><div class="t" style="left:2981.05px;top:1502.77px;font-size:30.059px;color:#000000;font-weight:400;transform:scaleX(0.7789);transform-origin:0 23.03px;">2011.10.13 00:00:00</div><div class="t" style="left:3280.85px;top:1502.77px;font-size:30.059px;color:#000000;font-weight:400;transform:scaleX(0.7789);transform-origin:0 23.03px;">2011.10.13 00:00:00.000</div><div class="t" style="left:3638.00px;top:1502.77px;font-size:30.059px;color:#000000;font-weight:400;transform:scaleX(0.7789);transform-origin:0 23.03px;">cd</div><div class="t" style="left:2121.97px;top:1552.77px;font-size:30.059px;color:#000000;font-weight:700;transform:scaleX(0.7789);transform-origin:0 23.03px;">2</div><div class="t" style="left:2169.00px;top:1552.77px;font-size:30.059px;color:#000000;font-weight:400;transform:scaleX(0.7789);transform-origin:0 23.03px;">cc</div><div class="t" style="left:2259.75px;top:1552.77px;font-size:30.059px;color:#000000;font-weight:400;transform:scaleX(0.7789);transform-origin:0 23.03px;">false</div><div class="t" style="left:2405.95px;top:1552.77px;font-size:30.059px;color:#000000;font-weight:400;transform:scaleX(0.7789);transform-origin:0 23.03px;">2</div><div class="t" style="left:2523.95px;top:1552.77px;font-size:30.059px;color:#000000;font-weight:400;transform:scaleX(0.7789);transform-origin:0 23.03px;">2</div><div class="t" style="left:2613.90px;top:1552.77px;font-size:30.059px;color:#000000;font-weight:400;transform:scaleX(0.7789);transform-origin:0 23.03px;">10</div><div class="t" style="left:2731.85px;top:1552.77px;font-size:30.059px;color:#000000;font-weight:400;transform:scaleX(0.7789);transform-origin:0 23.03px;">1.3</div><div class="t" style="left:2807.50px;top:1552.77px;font-size:30.059px;color:#000000;font-weight:400;transform:scaleX(0.7789);transform-origin:0 23.03px;">2011.10.14</div><div class="t" style="left:2981.05px;top:1552.77px;font-size:30.059px;color:#000000;font-weight:400;transform:scaleX(0.7789);transform-origin:0 23.03px;">2011.10.14 00:00:00</div><div class="t" style="left:3280.85px;top:1552.77px;font-size:30.059px;color:#000000;font-weight:400;transform:scaleX(0.7789);transform-origin:0 23.03px;">2011.10.14 00:00:00.000</div><div class="t" style="left:3638.00px;top:1552.77px;font-size:30.059px;color:#000000;font-weight:400;transform:scaleX(0.7789);transform-origin:0 23.03px;">jkl</div><div class="t" style="left:2121.97px;top:1602.77px;font-size:30.059px;color:#000000;font-weight:700;transform:scaleX(0.7789);transform-origin:0 23.03px;">3</div><div class="t" style="left:2169.00px;top:1602.77px;font-size:30.059px;color:#000000;font-weight:400;transform:scaleX(0.7789);transform-origin:0 23.03px;">dd</div><div class="t" style="left:2259.75px;top:1602.77px;font-size:30.059px;color:#000000;font-weight:400;transform:scaleX(0.7789);transform-origin:0 23.03px;">false</div><div class="t" style="left:2405.95px;top:1602.77px;font-size:30.059px;color:#000000;font-weight:400;transform:scaleX(0.7789);transform-origin:0 23.03px;">5</div><div class="t" style="left:2523.95px;top:1602.77px;font-size:30.059px;color:#000000;font-weight:400;transform:scaleX(0.7789);transform-origin:0 23.03px;">5</div><div class="t" style="left:2613.90px;top:1602.77px;font-size:30.059px;color:#000000;font-weight:400;transform:scaleX(0.7789);transform-origin:0 23.03px;">11</div><div class="t" style="left:2759.95px;top:1602.77px;font-size:30.059px;color:#000000;font-weight:400;transform:scaleX(0.7789);transform-origin:0 23.03px;">2</div><div class="t" style="left:2807.50px;top:1602.77px;font-size:30.059px;color:#000000;font-weight:400;transform:scaleX(0.7789);transform-origin:0 23.03px;">2011.10.15</div><div class="t" style="left:2981.05px;top:1602.77px;font-size:30.059px;color:#000000;font-weight:400;transform:scaleX(0.7789);transform-origin:0 23.03px;">2011.10.15 00:00:00</div><div class="t" style="left:3280.85px;top:1602.77px;font-size:30.059px;color:#000000;font-weight:400;transform:scaleX(0.7789);transform-origin:0 23.03px;">2011.10.15 00:00:00.000</div><div class="t" style="left:3638.00px;top:1602.77px;font-size:30.059px;color:#000000;font-weight:400;transform:scaleX(0.7789);transform-origin:0 23.03px;">io</div><div class="t" style="left:2121.97px;top:1652.77px;font-size:30.059px;color:#000000;font-weight:700;transform:scaleX(0.7789);transform-origin:0 23.03px;">4</div><div class="t" style="left:2169.00px;top:1652.77px;font-size:30.059px;color:#000000;font-weight:400;transform:scaleX(0.7789);transform-origin:0 23.03px;">ee</div><div class="t" style="left:2273.80px;top:1652.77px;font-size:30.059px;color:#000000;font-weight:400;transform:scaleX(0.7789);transform-origin:0 23.03px;">true</div><div class="t" style="left:2405.95px;top:1652.77px;font-size:30.059px;color:#000000;font-weight:400;transform:scaleX(0.7789);transform-origin:0 23.03px;">6</div><div class="t" style="left:2523.95px;top:1652.77px;font-size:30.059px;color:#000000;font-weight:400;transform:scaleX(0.7789);transform-origin:0 23.03px;">6</div><div class="t" style="left:2613.90px;top:1652.77px;font-size:30.059px;color:#000000;font-weight:400;transform:scaleX(0.7789);transform-origin:0 23.03px;">23</div><div class="t" style="left:2731.85px;top:1652.77px;font-size:30.059px;color:#000000;font-weight:400;transform:scaleX(0.7789);transform-origin:0 23.03px;">1.6</div><div class="t" style="left:2807.50px;top:1652.77px;font-size:30.059px;color:#000000;font-weight:400;transform:scaleX(0.7789);transform-origin:0 23.03px;">2011.10.16</div><div class="t" style="left:2981.05px;top:1652.77px;font-size:30.059px;color:#000000;font-weight:400;transform:scaleX(0.7789);transform-origin:0 23.03px;">2011.10.16 00:00:00</div><div class="t" style="left:3280.85px;top:1652.77px;font-size:30.059px;color:#000000;font-weight:400;transform:scaleX(0.7789);transform-origin:0 23.03px;">2011.10.16 00:00:00.000</div><div class="t" style="left:3638.00px;top:1652.77px;font-size:30.059px;color:#000000;font-weight:400;transform:scaleX(0.7789);transform-origin:0 23.03px;">pl</div><div class="t" style="left:2121.97px;top:1702.77px;font-size:30.059px;color:#000000;font-weight:700;transform:scaleX(0.7789);transform-origin:0 23.03px;">5</div><div class="t" style="left:2169.00px;top:1702.77px;font-size:30.059px;color:#000000;font-weight:400;transform:scaleX(0.7789);transform-origin:0 23.03px;">aa</div><div class="t" style="left:2273.80px;top:1702.77px;font-size:30.059px;color:#000000;font-weight:400;transform:scaleX(0.7789);transform-origin:0 23.03px;">true</div><div class="t" style="left:2405.95px;top:1702.77px;font-size:30.059px;color:#000000;font-weight:400;transform:scaleX(0.7789);transform-origin:0 23.03px;">1</div><div class="t" style="left:2523.95px;top:1702.77px;font-size:30.059px;color:#000000;font-weight:400;transform:scaleX(0.7789);transform-origin:0 23.03px;">1</div><div class="t" style="left:2627.95px;top:1702.77px;font-size:30.059px;color:#000000;font-weight:400;transform:scaleX(0.7789);transform-origin:0 23.03px;">5</div><div class="t" style="left:2717.80px;top:1702.77px;font-size:30.059px;color:#000000;font-weight:400;transform:scaleX(0.7789);transform-origin:0 23.03px;">10.9</div><div class="t" style="left:2807.50px;top:1702.77px;font-size:30.059px;color:#000000;font-weight:400;transform:scaleX(0.7789);transform-origin:0 23.03px;">2011.10.12</div><div class="t" style="left:2981.05px;top:1702.77px;font-size:30.059px;color:#000000;font-weight:400;transform:scaleX(0.7789);transform-origin:0 23.03px;">2011.10.12 00:00:00</div><div class="t" style="left:3280.85px;top:1702.77px;font-size:30.059px;color:#000000;font-weight:400;transform:scaleX(0.7789);transform-origin:0 23.03px;">2011.10.12 00:00:00.000</div><div class="t" style="left:3638.00px;top:1702.77px;font-size:30.059px;color:#000000;font-weight:400;transform:scaleX(0.7789);transform-origin:0 23.03px;">dk</div><div class="t" style="left:2121.97px;top:1752.77px;font-size:30.059px;color:#000000;font-weight:700;transform:scaleX(0.7789);transform-origin:0 23.03px;">6</div><div class="t" style="left:2169.00px;top:1752.77px;font-size:30.059px;color:#000000;font-weight:400;transform:scaleX(0.7789);transform-origin:0 23.03px;">bb</div><div class="t" style="left:2273.80px;top:1752.77px;font-size:30.059px;color:#000000;font-weight:400;transform:scaleX(0.7789);transform-origin:0 23.03px;">true</div><div class="t" style="left:2405.95px;top:1752.77px;font-size:30.059px;color:#000000;font-weight:400;transform:scaleX(0.7789);transform-origin:0 23.03px;">3</div><div class="t" style="left:2523.95px;top:1752.77px;font-size:30.059px;color:#000000;font-weight:400;transform:scaleX(0.7789);transform-origin:0 23.03px;">3</div><div class="t" style="left:2627.95px;top:1752.77px;font-size:30.059px;color:#000000;font-weight:400;transform:scaleX(0.7789);transform-origin:0 23.03px;">6</div><div class="t" style="left:2731.85px;top:1752.77px;font-size:30.059px;color:#000000;font-weight:400;transform:scaleX(0.7789);transform-origin:0 23.03px;">9.8</div><div class="t" style="left:2807.50px;top:1752.77px;font-size:30.059px;color:#000000;font-weight:400;transform:scaleX(0.7789);transform-origin:0 23.03px;">2011.10.13</div><div class="t" style="left:2981.05px;top:1752.77px;font-size:30.059px;color:#000000;font-weight:400;transform:scaleX(0.7789);transform-origin:0 23.03px;">2011.10.13 00:00:00</div><div class="t" style="left:3280.85px;top:1752.77px;font-size:30.059px;color:#000000;font-weight:400;transform:scaleX(0.7789);transform-origin:0 23.03px;">2011.10.13 00:00:00.000</div><div class="t" style="left:3638.00px;top:1752.77px;font-size:30.059px;color:#000000;font-weight:400;transform:scaleX(0.7789);transform-origin:0 23.03px;">cd</div><div class="t" style="left:2121.97px;top:1802.77px;font-size:30.059px;color:#000000;font-weight:700;transform:scaleX(0.7789);transform-origin:0 23.03px;">7</div><div class="t" style="left:2169.00px;top:1802.77px;font-size:30.059px;color:#000000;font-weight:400;transform:scaleX(0.7789);transform-origin:0 23.03px;">cc</div><div class="t" style="left:2259.75px;top:1802.77px;font-size:30.059px;color:#000000;font-weight:400;transform:scaleX(0.7789);transform-origin:0 23.03px;">false</div><div class="t" style="left:2405.95px;top:1802.77px;font-size:30.059px;color:#000000;font-weight:400;transform:scaleX(0.7789);transform-origin:0 23.03px;">2</div><div class="t" style="left:2523.95px;top:1802.77px;font-size:30.059px;color:#000000;font-weight:400;transform:scaleX(0.7789);transform-origin:0 23.03px;">2</div><div class="t" style="left:2613.90px;top:1802.77px;font-size:30.059px;color:#000000;font-weight:400;transform:scaleX(0.7789);transform-origin:0 23.03px;">10</div><div class="t" style="left:2731.85px;top:1802.77px;font-size:30.059px;color:#000000;font-weight:400;transform:scaleX(0.7789);transform-origin:0 23.03px;">1.3</div><div class="t" style="left:2807.50px;top:1802.77px;font-size:30.059px;color:#000000;font-weight:400;transform:scaleX(0.7789);transform-origin:0 23.03px;">2011.10.14</div><div class="t" style="left:2981.05px;top:1802.77px;font-size:30.059px;color:#000000;font-weight:400;transform:scaleX(0.7789);transform-origin:0 23.03px;">2011.10.14 00:00:00</div><div class="t" style="left:3280.85px;top:1802.77px;font-size:30.059px;color:#000000;font-weight:400;transform:scaleX(0.7789);transform-origin:0 23.03px;">2011.10.14 00:00:00.000</div><div class="t" style="left:3638.00px;top:1802.77px;font-size:30.059px;color:#000000;font-weight:400;transform:scaleX(0.7789);transform-origin:0 23.03px;">jkl</div><div class="t" style="left:2121.97px;top:1852.77px;font-size:30.059px;color:#000000;font-weight:700;transform:scaleX(0.7789);transform-origin:0 23.03px;">8</div><div class="t" style="left:2169.00px;top:1852.77px;font-size:30.059px;color:#000000;font-weight:400;transform:scaleX(0.7789);transform-origin:0 23.03px;">dd</div><div class="t" style="left:2259.75px;top:1852.77px;font-size:30.059px;color:#000000;font-weight:400;transform:scaleX(0.7789);transform-origin:0 23.03px;">false</div><div class="t" style="left:2405.95px;top:1852.77px;font-size:30.059px;color:#000000;font-weight:400;transform:scaleX(0.7789);transform-origin:0 23.03px;">5</div><div class="t" style="left:2523.95px;top:1852.77px;font-size:30.059px;color:#000000;font-weight:400;transform:scaleX(0.7789);transform-origin:0 23.03px;">5</div><div class="t" style="left:2613.90px;top:1852.77px;font-size:30.059px;color:#000000;font-weight:400;transform:scaleX(0.7789);transform-origin:0 23.03px;">11</div><div class="t" style="left:2759.95px;top:1852.77px;font-size:30.059px;color:#000000;font-weight:400;transform:scaleX(0.7789);transform-origin:0 23.03px;">2</div><div class="t" style="left:2807.50px;top:1852.77px;font-size:30.059px;color:#000000;font-weight:400;transform:scaleX(0.7789);transform-origin:0 23.03px;">2011.10.15</div><div class="t" style="left:2981.05px;top:1852.77px;font-size:30.059px;color:#000000;font-weight:400;transform:scaleX(0.7789);transform-origin:0 23.03px;">2011.10.15 00:00:00</div><div class="t" style="left:3280.85px;top:1852.77px;font-size:30.059px;color:#000000;font-weight:400;transform:scaleX(0.7789);transform-origin:0 23.03px;">2011.10.15 00:00:00.000</div><div class="t" style="left:3638.00px;top:1852.77px;font-size:30.059px;color:#000000;font-weight:400;transform:scaleX(0.7789);transform-origin:0 23.03px;">io</div><div class="t" style="left:2121.97px;top:1902.77px;font-size:30.059px;color:#000000;font-weight:700;transform:scaleX(0.7789);transform-origin:0 23.03px;">9</div><div class="t" style="left:2169.00px;top:1902.77px;font-size:30.059px;color:#000000;font-weight:400;transform:scaleX(0.7789);transform-origin:0 23.03px;">ee</div><div class="t" style="left:2273.80px;top:1902.77px;font-size:30.059px;color:#000000;font-weight:400;transform:scaleX(0.7789);transform-origin:0 23.03px;">true</div><div class="t" style="left:2405.95px;top:1902.77px;font-size:30.059px;color:#000000;font-weight:400;transform:scaleX(0.7789);transform-origin:0 23.03px;">6</div><div class="t" style="left:2523.95px;top:1902.77px;font-size:30.059px;color:#000000;font-weight:400;transform:scaleX(0.7789);transform-origin:0 23.03px;">6</div><div class="t" style="left:2613.90px;top:1902.77px;font-size:30.059px;color:#000000;font-weight:400;transform:scaleX(0.7789);transform-origin:0 23.03px;">23</div><div class="t" style="left:2731.85px;top:1902.77px;font-size:30.059px;color:#000000;font-weight:400;transform:scaleX(0.7789);transform-origin:0 23.03px;">1.6</div><div class="t" style="left:2807.50px;top:1902.77px;font-size:30.059px;color:#000000;font-weight:400;transform:scaleX(0.7789);transform-origin:0 23.03px;">2011.10.16</div><div class="t" style="left:2981.05px;top:1902.77px;font-size:30.059px;color:#000000;font-weight:400;transform:scaleX(0.7789);transform-origin:0 23.03px;">2011.10.16 00:00:00</div><div class="t" style="left:3280.85px;top:1902.77px;font-size:30.059px;color:#000000;font-weight:400;transform:scaleX(0.7789);transform-origin:0 23.03px;">2011.10.16 00:00:00.000</div><div class="t" style="left:3638.00px;top:1902.77px;font-size:30.059px;color:#000000;font-weight:400;transform:scaleX(0.7789);transform-origin:0 23.03px;">pl</div><div style="left:2104px;top:1943px;width:1219px;height:20px;background:#c1c1c1;"></div><div style="left:2144px;top:1987px;width:48px;height:48px;background:#ffffff;border:2px solid #1890ff;border-radius:4px;box-sizing:border-box"></div><div class="t" style="left:2160.97px;top:1997.12px;font-size:29.604px;color:#1890ff;font-weight:400;transform:scaleX(0.7909);transform-origin:0 22.68px;">1</div><div class="t" style="left:2208.97px;top:1997.12px;font-size:29.604px;color:#262626;font-weight:400;transform:scaleX(0.7909);transform-origin:0 22.68px;">2</div><div style="left:2293px;top:1987px;width:199px;height:48px;background:#ffffff;border:2px solid #d9d9d9;border-radius:4px;box-sizing:border-box"></div><div class="t" style="left:2306.50px;top:1997.12px;font-size:29.604px;color:#262626;font-weight:400;transform:scaleX(0.7909);transform-origin:0 22.68px;">10 / page</div><div class="t" style="left:2507.00px;top:1997.12px;font-size:29.604px;color:#262626;font-weight:400;transform:scaleX(0.7909);transform-origin:0 22.68px;">Go to</div><div style="left:2595px;top:1987px;width:87px;height:48px;background:#ffffff;border:2px solid #d9d9d9;border-radius:4px;box-sizing:border-box"></div><div class="t" style="left:2696.50px;top:1997.12px;font-size:29.604px;color:#262626;font-weight:400;transform:scaleX(0.7909);transform-origin:0 22.68px;">Page</div><div class="t" style="left:69.50px;top:2072.21px;font-size:27.782px;color:#ffffff;font-weight:400;transform:scaleX(0.7258);transform-origin:0 21.29px;">0</div><div class="t" style="left:133.50px;top:2072.21px;font-size:27.782px;color:#ffffff;font-weight:400;transform:scaleX(0.7258);transform-origin:0 21.29px;">0</div><div class="t" style="left:3012.00px;top:2072.11px;font-size:27.782px;color:#ffffff;font-weight:400;transform:scaleX(0.7258);transform-origin:0 21.29px;">Ln 75, Col 1</div><div class="t" style="left:3189.00px;top:2072.11px;font-size:27.782px;color:#ffffff;font-weight:400;transform:scaleX(0.7258);transform-origin:0 21.29px;">Spaces: 4</div><div class="t" style="left:3329.00px;top:2072.11px;font-size:27.782px;color:#ffffff;font-weight:400;transform:scaleX(0.7258);transform-origin:0 21.29px;">UTF-8</div><div class="t" style="left:3420.50px;top:2072.11px;font-size:27.782px;color:#ffffff;font-weight:400;transform:scaleX(0.7258);transform-origin:0 21.29px;">LF</div><div class="t" style="left:3477.00px;top:2072.11px;font-size:27.782px;color:#ffffff;font-weight:400;transform:scaleX(0.7258);transform-origin:0 21.29px;">DolphinDB</div><svg style="position:absolute;left:0;top:0" width="3736" height="2107" viewBox="0 0 3736 2107"><g stroke="#6b7280" stroke-width="2.2" fill="none"><path d="M3553 30 H3569"/><rect x="3620" y="26.5" width="11" height="11"/><path d="M3624 26.5 V22.5 H3635 V33.5 H3631"/><path d="M3684.5 22 L3701.5 38.5 M3701.5 22 L3684.5 38.5"/></g><g stroke="#ffffff" stroke-width="3" fill="none" stroke-linejoin="round"><path d="M38.5 148 H28 Q26.5 148 26.5 149.5 V181 Q26.5 182.5 28 182.5 H54.5 Q56 182.5 56 181 V170.5"/><path d="M41 135.5 H56.5 L67.7 146.5 V169 Q67.7 170.5 66.2 170.5 H41 Q39.5 170.5 39.5 169 V137 Q39.5 135.5 41 135.5 Z"/><path d="M56 136 V146.5 H67"/></g><g stroke="#858585" stroke-width="3" fill="none"><circle cx="54.3" cy="247.4" r="15.7"/><path d="M27.5 277.7 L43 259"/></g><g stroke="#858585" stroke-width="3" fill="none"><circle cx="37.2" cy="334.2" r="6.3"/><circle cx="58.4" cy="343.3" r="6.3"/><circle cx="37.2" cy="367.2" r="6.3"/><path d="M37.2 340.5 V361"/><path d="M58.4 349.6 Q58.4 356.5 51 356.5 H44 Q37.2 356.5 37.2 363"/></g><g stroke="#858585" stroke-width="3" fill="none" stroke-linejoin="miter"><path d="M40.5 446 V425 L71 443 L51 457"/><ellipse cx="35.8" cy="460" rx="6.5" ry="8"/><path d="M24 454 H29.5 M42 454 H47.5 M24 465 L29.5 461 M47.5 465 L42 461 M29 451 L33 454 M42.5 451 L38.5 454"/></g><g stroke="#858585" stroke-width="3" fill="none" stroke-linejoin="round"><path d="M43.5 547.5 V529.5 Q43.5 528.6 42.5 528.6 H25.2 Q24.2 528.6 24.2 529.6 V565.4 Q24.2 566.4 25.2 566.4 H61.8 Q62.8 566.4 62.8 565.4 V548.5 Q62.8 547.5 61.8 547.5 H24.2 M43.5 547.5 V566.4"/><rect x="51.8" y="519.6" width="19.8" height="19.8" rx="1.5"/></g><g stroke="#858585" stroke-width="3" fill="none"><circle cx="48" cy="1918.8" r="22.5"/><circle cx="48" cy="1914.7" r="10"/><path d="M33.5 1934.5 Q38 1924.5 48 1924.5 Q58 1924.5 62.5 1934.5"/></g><g stroke="#858585" stroke-width="3" fill="none" stroke-linejoin="round"><path d="M64.72 2009.63 L70.71 2011.14 L70.71 2018.46 L64.72 2019.97 L63.48 2022.96 L66.65 2028.26 L61.46 2033.45 L56.16 2030.28 L53.17 2031.52 L51.66 2037.51 L44.34 2037.51 L42.83 2031.52 L39.84 2030.28 L34.54 2033.45 L29.35 2028.26 L32.52 2022.96 L31.28 2019.97 L25.29 2018.46 L25.29 2011.14 L31.28 2009.63 L32.52 2006.64 L29.35 2001.34 L34.54 1996.15 L39.84 1999.32 L42.83 1998.08 L44.34 1992.09 L51.66 1992.09 L53.17 1998.08 L56.16 1999.32 L61.46 1996.15 L66.65 2001.34 L63.48 2006.64 Z"/><circle cx="48" cy="2014.8" r="5.8"/></g><g fill="#424242"><circle cx="587.5" cy="146" r="2.2"/><circle cx="598" cy="146" r="2.2"/><circle cx="608.5" cy="146" r="2.2"/></g><path d="M106.2 198.85 L115.95 208.35 L125.7 198.85" stroke="#424242" stroke-width="2" fill="none"/><g stroke="#b4b8b0" stroke-width="2.2"><path d="M135 239 H151.5 M135 244 H145 M135 249.5 H151.5 M135 254.5 H147"/></g><g stroke="#b4b8b0" stroke-width="2.2"><path d="M135 283 H151.5 M135 288 H145 M135 293.5 H151.5 M135 298.5 H147"/></g><path d="M106.1 545.85 L115.85 555.35 L125.6 545.85" stroke="#424242" stroke-width="2" fill="none"/><path d="M124 588.7 L133.9 598.5 L143.8 588.7" stroke="#424242" stroke-width="2" fill="none"/><circle cx="177.8" cy="593.3" r="14.3" stroke="#3c5eeb" stroke-width="2.7" fill="none"/><circle cx="177.8" cy="593.3" r="9.1" fill="#3c5eeb"/><g stroke="#808080" stroke-width="2.75" fill="none"><path d="M596.8 585 L602.3 579.5 A7.57 7.57 0 0 1 613 590.2 L607.5 595.7"/><path d="M592.7 589.3 L587.2 594.8 A7.57 7.57 0 0 0 597.9 605.5 L603.4 600"/><path d="M595.8 597.2 L604.2 588.8"/></g><path d="M139.4 632.75 L149.4 642.25 L159.4 632.75" stroke="#424242" stroke-width="2" fill="none"/><g stroke="#3c5eeb" stroke-width="2.3" fill="none"><rect x="180.7" y="623.2" width="26.6" height="26.2" rx="3"/><path d="M180.7 628 H207.3 M188 628 V649.4"/></g><g stroke="#0078d4" stroke-width="2.2" fill="none" stroke-linejoin="round"><path d="M200.8 673.6 H197 V690 H200.8 M219.3 673.6 H223.1 V690 H219.3"/><path d="M203.6 680.6 L211.8 675.9 L218.6 679.4 L210.4 684.1 Z M203.6 680.6 V684.6 L208.6 688.4 L218.6 683.4 V679.4 M210.4 684.1 L208.6 688.4"/></g><circle cx="134" cy="726" r="14.2" stroke="#6f6f6f" stroke-width="2.6" fill="none"/><circle cx="134" cy="770" r="14.2" stroke="#6f6f6f" stroke-width="2.6" fill="none"/><circle cx="134" cy="814" r="14.2" stroke="#6f6f6f" stroke-width="2.6" fill="none"/><circle cx="134" cy="858" r="14.2" stroke="#6f6f6f" stroke-width="2.6" fill="none"/><circle cx="134" cy="902" r="14.2" stroke="#6f6f6f" stroke-width="2.6" fill="none"/><g stroke="#a8a8a8" stroke-width="2.2"><path d="M679 138 H695.5 M679 143 H689 M679 148.5 H695.5 M679 153.5 H691"/></g><path d="M846 137.5 L862.5 154 M862.5 137.5 L846 154" stroke="#424242" stroke-width="2.2"/><g stroke="#b0b0b0" stroke-width="2.2"><path d="M919 138 H935.5 M919 143 H929 M919 148.5 H935.5 M919 153.5 H931"/></g><g stroke="#424242" stroke-width="2.4" fill="none"><rect x="3626.5" y="132.5" width="25" height="25" rx="2.5"/><path d="M3639 132.5 V157.5"/></g><g fill="#424242"><circle cx="3679.5" cy="146" r="2.3"/><circle cx="3690" cy="146" r="2.3"/><circle cx="3700.5" cy="146" r="2.3"/></g><g stroke="#b0b0b0" stroke-width="2.2"><path d="M691 196 H707.5 M691 201 H701 M691 206.5 H707.5 M691 211.5 H703"/></g><path d="M3644.5 1306 L3654.2 1296.5 L3664 1306" stroke="#424242" stroke-width="2.2" fill="none"/><path d="M3689.5 1292.5 L3706.5 1309.5 M3706.5 1292.5 L3689.5 1309.5" stroke="#424242" stroke-width="2.2" fill="none"/><path d="M654 1352.85 L663.75 1362.35 L673.5 1352.85" stroke="#424242" stroke-width="2" fill="none"/><path d="M2114 1352.85 L2123.75 1362.35 L2133.5 1352.85" stroke="#424242" stroke-width="2" fill="none"/><path d="M2126 2002 L2114.5 2011 L2126 2020" stroke="#c0c0c0" stroke-width="2.2" fill="none"/><path d="M2257.5 2002 L2269 2011 L2257.5 2020" stroke="#333333" stroke-width="2.2" fill="none"/><path d="M2449 2005 L2458 2014 L2467 2005" stroke="#c0c0c0" stroke-width="2" fill="none"/><g stroke="#ffffff" stroke-width="2.2" fill="none"><circle cx="43.9" cy="2085" r="11.5"/><path d="M38.5 2079.6 L49.3 2090.4 M49.3 2079.6 L38.5 2090.4"/><path d="M108 2075 L118.8 2094 H97.2 Z" stroke-linejoin="round"/></g><rect x="106.9" y="2080" width="2.2" height="8" fill="#fff"/><rect x="106.9" y="2090" width="2.2" height="2.2" fill="#fff"/><g stroke="#ffffff" stroke-width="2" fill="none" stroke-linejoin="round"><path d="M3627 2073.5 H3644 V2085 H3639 L3635 2089"/><circle cx="3630" cy="2085" r="5"/><path d="M3620.5 2097 Q3621 2090 3630 2090 Q3638.5 2090 3639 2097"/></g><g stroke="#ffffff" stroke-width="2" fill="none" stroke-linejoin="round"><path d="M3683 2092 Q3686 2089 3686 2085 V2082 Q3686 2074.5 3692 2074.5 Q3698 2074.5 3698 2082 V2085 Q3698 2089 3701 2092 Z"/><path d="M3689.5 2094 Q3692 2097.5 3694.5 2094"/></g></svg>
</body></html>
